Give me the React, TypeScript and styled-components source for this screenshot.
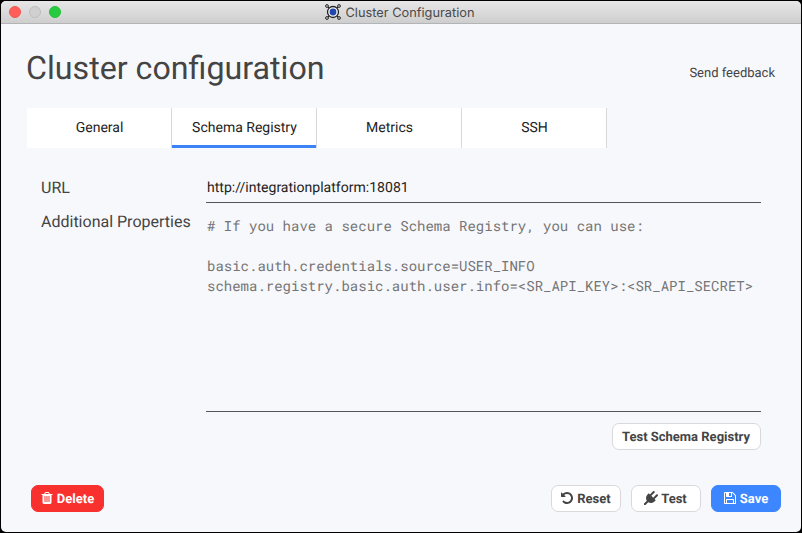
import React from 'react';
import styled, { createGlobalStyle, css } from 'styled-components';

const GlobalStyle = createGlobalStyle`
  * { box-sizing: border-box; }
  html, body { margin: 0; padding: 0; background: #000; overflow: hidden; }
  button, input, textarea { font: inherit; text-rendering: inherit; }
`;

const Window = styled.main`
  width: 800px;
  height: 531px;
  margin: 1px;
  display: flex;
  flex-direction: column;
  overflow: hidden;
  border-radius: 5px;
  background: #f7f8fc;
  color: #444;
  font-family: Roboto, sans-serif;
  text-rendering: geometricPrecision;
`;

const TitleBar = styled.header`
  flex: none;
  height: 23px;
  display: grid;
  grid-template-columns: 1fr auto 1fr;
  align-items: center;
  padding: 0 8px;
  background: linear-gradient(#e7e7e7, #cecece);
  border-bottom: 1px solid #b2b4b5;
`;

const Lights = styled.div`
  display: flex;
  gap: 8px;
`;

const Light = styled.span<{ $fill: string; $edge: string }>`
  width: 12px;
  height: 12px;
  border-radius: 50%;
  background: ${p => p.$fill};
  border: 1px solid ${p => p.$edge};
`;

const WindowTitle = styled.div`
  display: flex;
  align-items: center;
  gap: 4px;
  height: 22px;
  padding-right: 2px;
  font: 12.8px/18px Inter, sans-serif;
  color: #4a4a4a;

  span { padding-top: 3px; }
`;

const Heading = styled.div`
  flex: none;
  height: 84px;
  display: flex;
  justify-content: space-between;
  padding: 0 26px 0 25px;
`;

const PageTitle = styled.h1`
  margin: 22px 0 0;
  font-size: 32.2px;
  line-height: 44px;
  font-weight: 400;
`;

const Feedback = styled.a`
  margin-top: 40px;
  font-size: 13px;
  line-height: 20px;
`;

const Tabs = styled.nav`
  flex: none;
  display: flex;
  width: 580px;
  height: 40px;
  margin-left: 26px;
`;

const Tab = styled.button<{ $active?: boolean }>`
  flex: 1;
  padding: 0 0 1px 1px;
  border: 0;
  border-right: 1px solid #d8d8d8;
  background: #fff;
  color: #222;
  font-size: 14px;
  ${p => p.$active && css`box-shadow: inset 0 -3px #3c83f8;`}
`;

const Form = styled.section`
  flex: none;
  display: grid;
  grid-template-columns: 165px 555px;
  grid-template-rows: 35px 208px;
  margin: 20px 0 0 40px;
`;

const Label = styled.label<{ $drop?: number }>`
  padding-top: ${p => p.$drop ?? 0}px;
  font-size: 16px;
  line-height: 38px;
`;

const UrlInput = styled.input`
  height: 35px;
  padding: 5px 1px 0;
  border: 0;
  border-bottom: 1px solid #555;
  outline: 0;
  background: transparent;
  color: #222;
  font-size: 14.05px;
`;

const Properties = styled.textarea`
  height: 209px;
  padding: 13px 0 0 1px;
  border: 0;
  border-bottom: 1px solid #555;
  outline: 0;
  resize: none;
  background: transparent;
  font-family: 'Roboto Mono', 'DejaVu Sans Mono', monospace;
  font-size: 14px;
  line-height: 20px;
  &::placeholder { color: #757575; opacity: 1; }
`;

const TestRow = styled.div`
  flex: none;
  display: flex;
  justify-content: flex-end;
  margin: 12px 40px 0 0;
`;

const Footer = styled.footer`
  flex: none;
  display: flex;
  gap: 10px;
  margin: 35px 20px 0 30px;
`;

const tones = {
  plain: css`background: #fff; color: #444; border-color: #d9d9dc;`,
  danger: css`background: #f8312f; color: #fff; border-color: #f8312f;`,
  primary: css`background: #3c86ff; color: #fff; border-color: #3c86ff;`,
};

const Button = styled.button<{ $tone?: keyof typeof tones; $width: number; $push?: boolean }>`
  width: ${p => p.$width}px;
  height: 27px;
  display: flex;
  align-items: center;
  justify-content: center;
  gap: 3px;
  padding: 2px 1px 0 0;
  border: 1px solid;
  border-radius: 7px;
  font-size: 13px;
  line-height: 15px;
  font-weight: 700;
  white-space: nowrap;
  ${p => tones[p.$tone ?? 'plain']}
  ${p => p.$push && css`margin-right: auto;`}
`;

const Glyph = styled.svg`
  flex: none;
  width: 14px;
  height: 14px;
  margin-bottom: 3px;
  fill: currentColor;
`;

const paths = {
  trash: 'M704 1376v-704q0-14-9-23t-23-9h-64q-14 0-23 9t-9 23v704q0 14 9 23t23 9h64q14 0 23-9t9-23zm256 0v-704q0-14-9-23t-23-9h-64q-14 0-23 9t-9 23v704q0 14 9 23t23 9h64q14 0 23-9t9-23zm256 0v-704q0-14-9-23t-23-9h-64q-14 0-23 9t-9 23v704q0 14 9 23t23 9h64q14 0 23-9t9-23zm-544-992h448l-48-117q-7-9-17-11h-317q-10 2-17 11zm928 32v64q0 14-9 23t-23 9h-96v948q0 83-47 143.5t-113 60.5h-832q-66 0-113-58.5t-47-141.5v-952h-96q-14 0-23-9t-9-23v-64q0-14 9-23t23-9h309l70-167q15-37 54-63t79-26h320q40 0 79 26t54 63l70 167h309q14 0 23 9t9 23z',
  undo: 'M1664 896q0 156-61 298t-164 245-245 164-298 61q-172 0-327-72.5t-264-204.5q-7-10-6.5-22.5t8.5-20.5l137-138q10-9 25-9 16 2 23 12 73 95 179 147t225 52q104 0 198.5-40.5t163.5-109.5 109.5-163.5 40.5-198.5-40.5-198.5-109.5-163.5-163.5-109.5-198.5-40.5q-98 0-188 35.5t-160 101.5l137 138q31 30 14 69-17 40-59 40h-448q-26 0-45-19t-19-45v-448q0-42 40-59 39-17 69 14l130 129q107-101 244.5-156.5t284.5-55.5q156 0 298 61t245 164 164 245 61 298z',
  plug: 'M1755 453q37 38 37 90.5t-37 90.5l-401 400 150 150-160 160q-163 163-389.5 186.5t-411.5-100.5l-362 362h-181v-181l362-362q-124-185-100.5-411.5t186.5-389.5l160-160 150 150 400-401q38-37 91-37t90 37 37 90.5-37 90.5l-400 401 234 234 401-400q38-37 91-37t90 37z',
  save: 'M512 1536h768v-384h-768v384zm896 0h128v-896q0-14-10-38.5t-20-34.5l-281-281q-10-10-34-20t-39-10v416q0 40-28 68t-68 28h-576q-40 0-68-28t-28-68v-416h-128v1280h128v-416q0-40 28-68t68-28h832q40 0 68 28t28 68v416zm-384-928v-320q0-13-9.5-22.5t-22.5-9.5h-192q-13 0-22.5 9.5t-9.5 22.5v320q0 13 9.5 22.5t22.5 9.5h192q13 0 22.5-9.5t9.5-22.5zm640 32v928q0 40-28 68t-68 28h-1344q-40 0-68-28t-28-68v-1344q0-40 28-68t68-28h928q40 0 88 20t76 48l280 280q28 28 48 76t20 88z',
};

const Icon = ({ name }: { name: keyof typeof paths }) => (
  <Glyph viewBox="0 0 1792 1792" aria-hidden="true"><path d={paths[name]} /></Glyph>
);

const Logo = () => (
  <svg width="16" height="16" viewBox="0 0 16 16" fill="none" stroke="#222" strokeWidth="1" aria-hidden="true">
    <path d="M3 3l10 10M13 3L3 13" />
    <circle cx="8" cy="8" r="5.5" fill="#f4f4f4" strokeWidth="1.3" />
    <circle cx="8" cy="8" r="3.4" fill="#2146ad" stroke="none" />
    {[[2, 2], [14, 2], [2, 14], [14, 14]].map(([x, y]) => (
      <circle key={`${x}-${y}`} cx={x} cy={y} r="1.4" fill="#ddd" />
    ))}
  </svg>
);

const hint = `# If you have a secure Schema Registry, you can use:

basic.auth.credentials.source=USER_INFO
schema.registry.basic.auth.user.info=<SR_API_KEY>:<SR_API_SECRET>`;

export default function App() {
  return (
    <>
      <GlobalStyle />
      <Window>
        <TitleBar>
          <Lights>
            <Light $fill="#ff5f58" $edge="#f4564f" />
            <Light $fill="#d0d0d0" $edge="#bdbdbd" />
            <Light $fill="#28cb40" $edge="#22bf39" />
          </Lights>
          <WindowTitle><Logo /><span>Cluster Configuration</span></WindowTitle>
        </TitleBar>
        <Heading>
          <PageTitle>Cluster configuration</PageTitle>
          <Feedback>Send feedback</Feedback>
        </Heading>
        <Tabs>
          <Tab>General</Tab>
          <Tab $active>Schema Registry</Tab>
          <Tab>Metrics</Tab>
          <Tab>SSH</Tab>
        </Tabs>
        <Form>
          <Label htmlFor="url" $drop={1}>URL</Label>
          <UrlInput id="url" defaultValue="http://integrationplatform:18081" />
          <Label htmlFor="properties">Additional Properties</Label>
          <Properties id="properties" placeholder={hint} spellCheck={false} />
        </Form>
        <TestRow><Button $width={149}>Test Schema Registry</Button></TestRow>
        <Footer>
          <Button $tone="danger" $width={73} $push><Icon name="trash" />Delete</Button>
          <Button $width={70}><Icon name="undo" />Reset</Button>
          <Button $width={70}><Icon name="plug" />Test</Button>
          <Button $tone="primary" $width={70}><Icon name="save" />Save</Button>
        </Footer>
      </Window>
    </>
  );
}
